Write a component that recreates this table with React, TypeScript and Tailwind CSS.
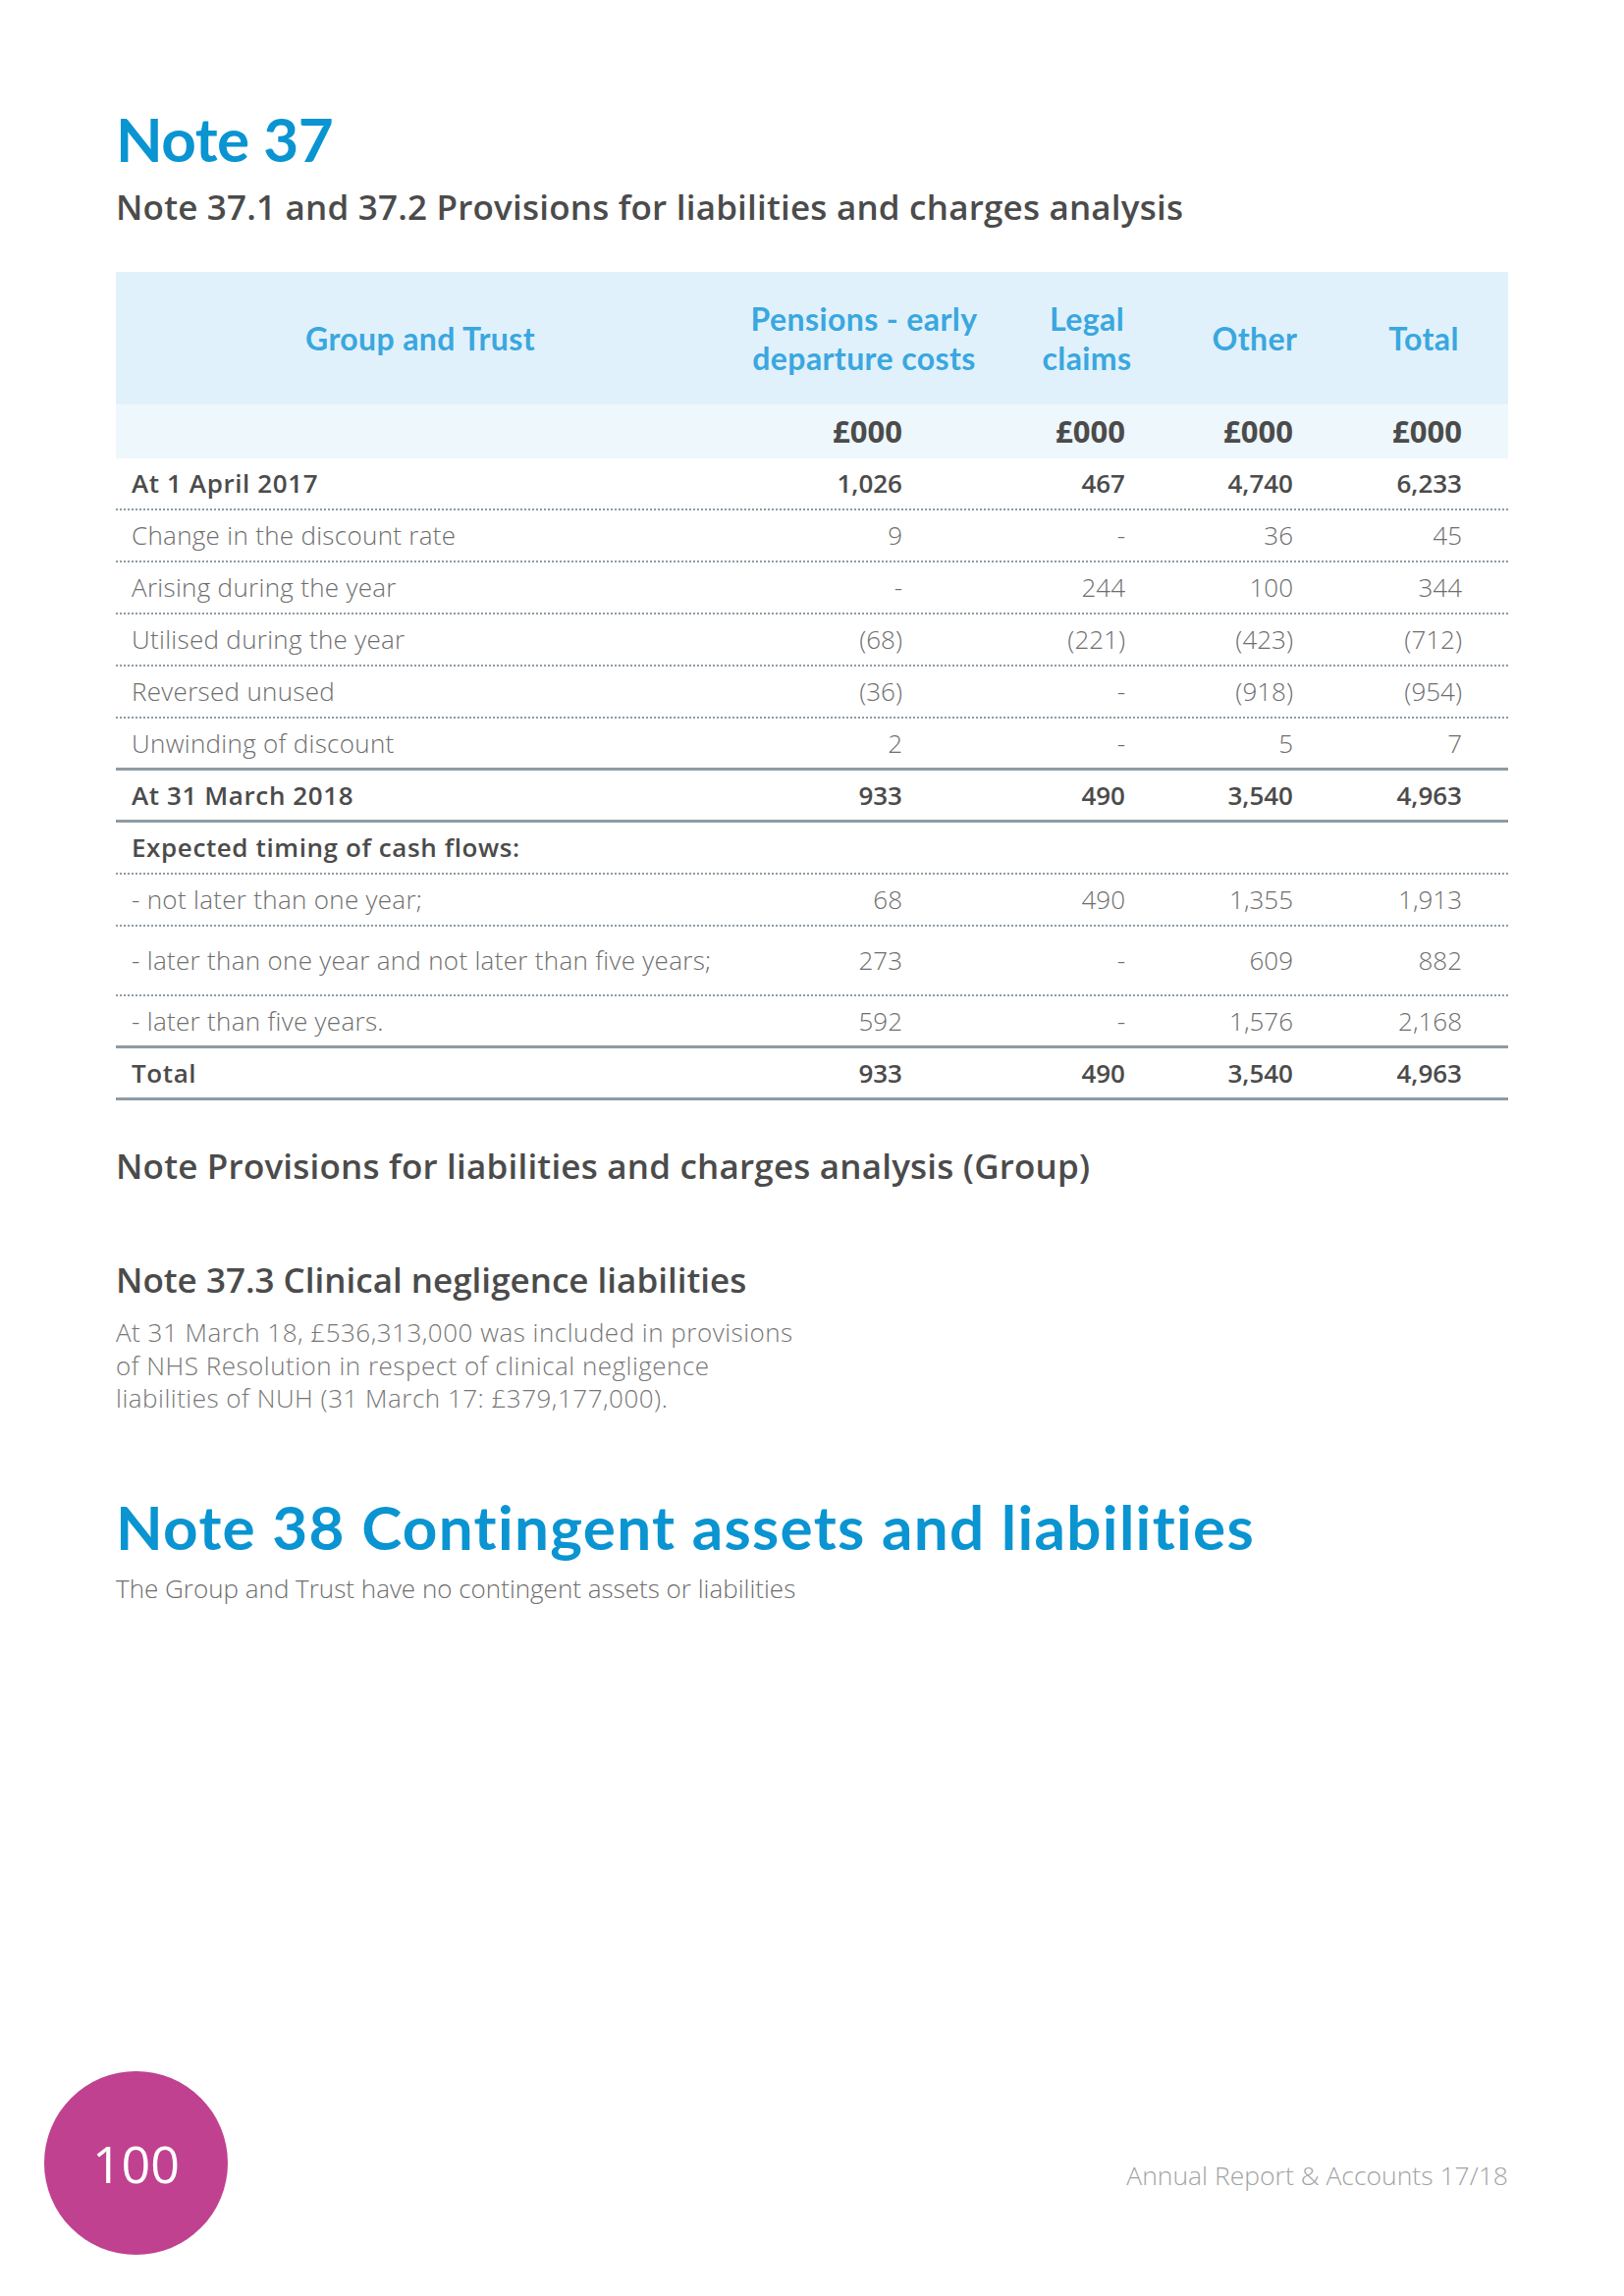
import React from 'react';

interface Row {
    label: string;
    values: string[];
    bold?: boolean;
    line: 'dotted' | 'solid';
    tall?: boolean;
}

const rows: Row[] = [
    { label: 'At 1 April 2017', values: ['1,026', '467', '4,740', '6,233'], bold: true, line: 'dotted' },
    { label: 'Change in the discount rate', values: ['9', '-', '36', '45'], line: 'dotted' },
    { label: 'Arising during the year', values: ['-', '244', '100', '344'], line: 'dotted' },
    { label: 'Utilised during the year', values: ['(68)', '(221)', '(423)', '(712)'], line: 'dotted' },
    { label: 'Reversed unused', values: ['(36)', '-', '(918)', '(954)'], line: 'dotted' },
    { label: 'Unwinding of discount', values: ['2', '-', '5', '7'], line: 'solid' },
    { label: 'At 31 March 2018', values: ['933', '490', '3,540', '4,963'], bold: true, line: 'solid' },
    { label: 'Expected timing of cash flows:', values: ['', '', '', ''], bold: true, line: 'dotted' },
    { label: '- not later than one year;', values: ['68', '490', '1,355', '1,913'], line: 'dotted' },
    { label: '- later than one year and not later than five years;', values: ['273', '-', '609', '882'], line: 'dotted', tall: true },
    { label: '- later than five years.', values: ['592', '-', '1,576', '2,168'], line: 'solid' },
    { label: 'Total', values: ['933', '490', '3,540', '4,963'], bold: true, line: 'solid' },
];

const grid = 'grid grid-cols-[620px_284px_170px_172px_172px]';
const body = "font-['Open_Sans','Liberation_Sans',sans-serif]";
const round = "font-['Lato','Open_Sans',sans-serif] [font-variant-ligatures:none]";

export default function App() {
    return (
        <div className={`w-[1654px] h-[2339px] bg-white flex flex-col ${body}`}>
            <div className="pl-[118px] w-[1536px]">
                <h1 className={`${round} font-bold text-[62px] leading-[62px] text-[#0a94d1] mt-[110px] tracking-[-0.5px]`}>Note 37</h1>
                <h2 className="font-semibold text-[35px] leading-[35px] text-[#4b4b4b] mt-[21px] tracking-[0.2px]">
                    Note 37.1 and 37.2 Provisions for liabilities and charges analysis
                </h2>

                <div className="mt-[49px]">
                    <div className={`${grid} h-[135px] bg-[#e1f1fb] items-center ${round} font-bold text-[32px] leading-[40px] tracking-[0.4px] text-[#3aa7df]`}>
                        <div className="text-center">Group and Trust</div>
                        <div className="text-center">Pensions - early<br />departure costs</div>
                        <div className="text-center">Legal<br />claims</div>
                        <div className="text-center">Other</div>
                        <div className="text-center">Total</div>
                    </div>
                    <div className={`${grid} h-[55px] bg-[#eef7fc] items-center font-bold text-[31px] text-[#4b4b4b]`}>
                        <div></div>
                        <div className="text-right pr-[103px]">£000</div>
                        <div className="text-right pr-[46px]">£000</div>
                        <div className="text-right pr-[47px]">£000</div>
                        <div className="text-right pr-[47px]">£000</div>
                    </div>

                    {rows.map((row) => (
                        <div
                            key={row.label}
                            className={`${grid} items-center text-[26px] ${row.tall ? 'h-[71px]' : 'h-[53px]'} ${
                                row.line === 'dotted'
                                    ? 'border-b-[2px] border-dotted border-[#8d9ba4]'
                                    : 'border-b-[3px] border-solid border-[#8d9ba4]'
                            } ${row.bold ? 'font-semibold text-[#4b4b4b]' : 'font-light text-[#6e6e6e]'}`}
                        >
                            <div className={`pl-[16px] whitespace-nowrap ${row.bold ? 'tracking-[0.6px]' : 'tracking-[0.3px]'}`}>{row.label}</div>
                            <div className="text-right pr-[103px]">{row.values[0]}</div>
                            <div className="text-right pr-[46px]">{row.values[1]}</div>
                            <div className="text-right pr-[47px]">{row.values[2]}</div>
                            <div className="text-right pr-[47px]">{row.values[3]}</div>
                        </div>
                    ))}
                </div>

                <h2 className="font-semibold text-[35px] leading-[35px] text-[#4b4b4b] mt-[49px] tracking-[0.2px]">
                    Note Provisions for liabilities and charges analysis (Group)
                </h2>

                <h2 className="font-semibold text-[35px] leading-[35px] text-[#4b4b4b] mt-[81px]">
                    Note 37.3 Clinical negligence liabilities
                </h2>
                <p className="font-light text-[26px] leading-[33.5px] tracking-[0.5px] text-[#777777] mt-[20px]">
                    At 31 March 18, £536,313,000 was included in provisions<br />
                    of NHS Resolution in respect of clinical negligence<br />
                    liabilities of NUH (31 March 17: £379,177,000).
                </p>

                <h1 className={`${round} font-bold text-[62px] leading-[62px] text-[#0a94d1] mt-[82px] tracking-[1.3px]`}>
                    Note 38 Contingent assets and liabilities
                </h1>
                <p className="font-light text-[26px] leading-[30px] text-[#6e6e6e] mt-[17px]">
                    The Group and Trust have no contingent assets or liabilities
                </p>
            </div>

            <div className="mt-auto mb-[42px] flex items-center justify-between pl-[45px] w-[1536px]">
                <div className="w-[187px] h-[187px] rounded-full bg-[#c0418f] flex items-center justify-center">
                    <span className="text-white text-[52px] font-normal leading-none">100</span>
                </div>
                <div className="font-light text-[26.5px] text-[#a3a3a3] mt-[26px]">Annual Report &amp; Accounts 17/18</div>
            </div>
        </div>
    );
}
